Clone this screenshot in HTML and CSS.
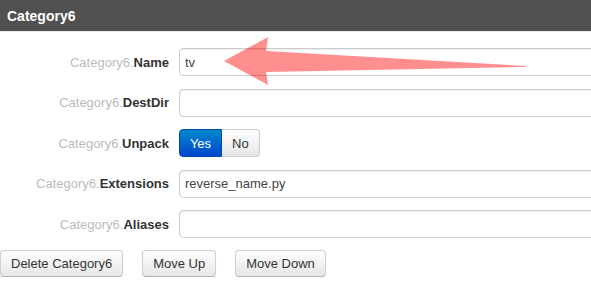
FILE: index.html
```html
<!DOCTYPE HTML>
<html>
<head>
<meta http-equiv="Content-Type" content="text/html; charset=utf-8" />
	<title>Category6</title>
<link rel="stylesheet" href="styles.css">
</head>
<body>
	<div id="panel">
		<div class="head">Category6</div>
		<div class="rows">
			<div class="row">
				<label class="lbl"><span class="pre">Category6.</span>Name</label>
				<input class="txt" type="text" value="tv">
			</div>
			<div class="row">
				<label class="lbl"><span class="pre">Category6.</span>DestDir</label>
				<input class="txt" type="text" value="">
			</div>
			<div class="row">
				<label class="lbl"><span class="pre">Category6.</span>Unpack</label>
				<div class="toggle">
					<span class="opt on">Yes</span><span class="opt">No</span>
				</div>
			</div>
			<div class="row">
				<label class="lbl"><span class="pre">Category6.</span>Extensions</label>
				<input class="txt" type="text" value="reverse_name.py">
			</div>
			<div class="row">
				<label class="lbl"><span class="pre">Category6.</span>Aliases</label>
				<input class="txt" type="text" value="">
			</div>
		</div>
		<div class="actions">
			<a href="#" class="btn">Delete Category6</a>
			<a href="#" class="btn">Move Up</a>
			<a href="#" class="btn">Move Down</a>
		</div>
	</div>
	<svg class="arrow" width="591" height="292" viewBox="0 0 591 292">
		<polygon points="224,61 268,37 266,51 526,66 526,67 266,72 268,85" fill="rgba(255,0,0,0.44)" />
	</svg>
</body>
</html>
```

FILE: styles.css
```css
*{
	margin: 0;
	padding: 0;
	box-sizing: border-box;
	text-decoration: none;
}
body{
	font-family: "Liberation Sans", Arial, sans-serif;
	font-size: 13px;
	color: #333;
	background: #fff;
	overflow: hidden;
	position: relative;
}
#panel{
	width: 591px;
	overflow: hidden;
}
.head{
	height: 32px;
	line-height: 32px;
	padding-left: 7px;
	background: #505050;
	border-bottom: 1px solid #ececec;
	color: #fff;
	font-size: 14px;
	font-weight: bold;
}
.rows{
	display: flex;
	flex-direction: column;
	gap: 12.5px;
	margin-top: 16px;
}
.row{
	display: flex;
	align-items: center;
	gap: 10px;
	height: 28px;
}
.lbl{
	width: 169px;
	flex: none;
	text-align: right;
	font-size: 13px;
	font-weight: bold;
	color: #333;
}
.lbl .pre{
	font-weight: normal;
	color: #bbb;
}
.txt{
	flex: none;
	width: 460px;
	height: 28px;
	padding: 0 5px;
	border: 1px solid #ccc;
	border-radius: 4px;
	font-family: "Liberation Sans", Arial, sans-serif;
	font-size: 13px;
	color: #444;
	background: #fff;
	box-shadow: inset 0 1px 1px rgba(0,0,0,0.075);
}
.toggle{
	display: flex;
	height: 28px;
}
.opt{
	display: flex;
	align-items: center;
	padding: 0 10px;
	border: 1px solid #ccc;
	border-left: none;
	border-radius: 0 4px 4px 0;
	background: linear-gradient(#fff, #e6e6e6);
	color: #333;
	font-size: 13px;
}
.opt.on{
	width: 43px;
	justify-content: center;
	border: 1px solid #0049b0;
	border-radius: 4px 0 0 4px;
	background: linear-gradient(#0088cc, #0046cc);
	color: #fff;
}
.actions{
	display: flex;
	gap: 19px;
	margin-top: 12px;
}
.btn{
	display: inline-flex;
	align-items: center;
	height: 27px;
	padding: 0 10px;
	border: 1px solid #cfcfcf;
	border-bottom-color: #b3b3b3;
	border-radius: 4px;
	background: linear-gradient(#fff, #e6e6e6);
	box-shadow: inset 0 1px 0 rgba(255,255,255,0.2), 0 1px 2px rgba(0,0,0,0.05);
	color: #333;
	font-size: 13px;
}
.arrow{
	position: absolute;
	left: 0;
	top: 0;
	pointer-events: none;
}
```
